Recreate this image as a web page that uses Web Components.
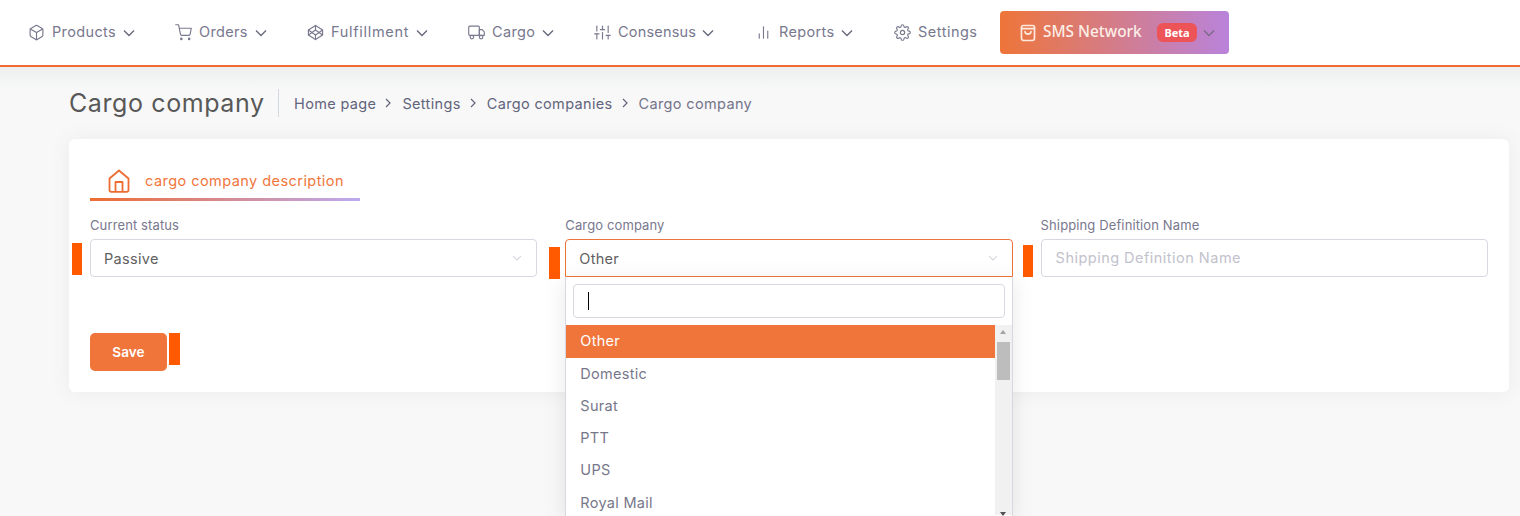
<!DOCTYPE html>
<html>
<head>
<meta charset="utf-8">
<style>
  html, body { margin: 0; height: 516px; overflow: hidden; }
  body { background: #f8f8f8; font-family: Inter, "Open Sans", sans-serif; }
</style>
</head>
<body>
<app-header>
  <nav-item icon="box" w="65" chevron>Products</nav-item>
  <nav-item icon="cart" w="50" chevron>Orders</nav-item>
  <nav-item icon="codepen" w="79" ls=".7" chevron>Fulfillment</nav-item>
  <nav-item icon="truck" w="44" chevron>Cargo</nav-item>
  <nav-item icon="sliders" w="78" ls=".2" chevron>Consensus</nav-item>
  <nav-item icon="chart" w="56" style="margin-left:1px" chevron>Reports</nav-item>
  <nav-item icon="settings" w="59" ls=".5" style="margin-left:1px">Settings</nav-item>
  <sms-button></sms-button>
</app-header>
<page-head title="Cargo company">
  <bread-crumb>Home page</bread-crumb>
  <bread-crumb>Settings</bread-crumb>
  <bread-crumb>Cargo companies</bread-crumb>
  <bread-crumb last>Cargo company</bread-crumb>
</page-head>
<form-card>
  <card-tab slot="tab">cargo company description</card-tab>
  <form-field label="Current status" mark="-18,4,10,32">
    <select-box value="Passive"></select-box>
  </form-field>
  <form-field label="Cargo company" mark="-16,8,11,32">
    <select-box value="Other" open>
      <select-menu>
        <menu-option active>Other</menu-option>
        <menu-option>Domestic</menu-option>
        <menu-option>Surat</menu-option>
        <menu-option>PTT</menu-option>
        <menu-option>UPS</menu-option>
        <menu-option style="margin-top:1px">Royal Mail</menu-option>
      </select-menu>
    </select-box>
  </form-field>
  <form-field label="Shipping Definition Name" mark="-18,6,10,32">
    <text-box placeholder="Shipping Definition Name"></text-box>
  </form-field>
  <save-button slot="footer">Save</save-button>
</form-card>

<script>
const ICONS = {
  box: '<path d="M21 16V8a2 2 0 0 0-1-1.73l-7-4a2 2 0 0 0-2 0l-7 4A2 2 0 0 0 3 8v8a2 2 0 0 0 1 1.73l7 4a2 2 0 0 0 2 0l7-4A2 2 0 0 0 21 16z"/><polyline points="3.27 6.96 12 12.01 20.73 6.96"/><line x1="12" y1="22.08" x2="12" y2="12"/>',
  cart: '<circle cx="9" cy="21" r="1"/><circle cx="20" cy="21" r="1"/><path d="M1 1h4l2.68 13.39a2 2 0 0 0 2 1.61h9.72a2 2 0 0 0 2-1.61L23 6H6"/>',
  codepen: '<polygon points="12 2 22 8.5 22 15.5 12 22 2 15.5 2 8.5 12 2"/><line x1="12" y1="22" x2="12" y2="15.5"/><polyline points="22 8.5 12 15.5 2 8.5"/><polyline points="2 15.5 12 8.5 22 15.5"/><line x1="12" y1="2" x2="12" y2="8.5"/>',
  truck: '<rect x="1" y="3" width="15" height="13" rx="1.5"/><polygon points="16 8 20 8 23 11 23 16 16 16 16 8"/><circle cx="5.5" cy="18.5" r="2.5"/><circle cx="18.5" cy="18.5" r="2.5"/>',
  sliders: '<line x1="4" y1="21" x2="4" y2="14"/><line x1="4" y1="10" x2="4" y2="3"/><line x1="12" y1="21" x2="12" y2="12"/><line x1="12" y1="8" x2="12" y2="3"/><line x1="20" y1="21" x2="20" y2="16"/><line x1="20" y1="12" x2="20" y2="3"/><line x1="1" y1="14" x2="7" y2="14"/><line x1="9" y1="8" x2="15" y2="8"/><line x1="17" y1="16" x2="23" y2="16"/>',
  chart: '<line x1="18" y1="20" x2="18" y2="10"/><line x1="12" y1="20" x2="12" y2="4"/><line x1="6" y1="20" x2="6" y2="14"/>',
  settings: '<circle cx="12" cy="12" r="3"/><path d="M19.4 15a1.65 1.65 0 0 0 .33 1.82l.06.06a2 2 0 0 1 0 2.83 2 2 0 0 1-2.83 0l-.06-.06a1.65 1.65 0 0 0-1.82-.33 1.65 1.65 0 0 0-1 1.51V21a2 2 0 0 1-2 2 2 2 0 0 1-2-2v-.09A1.65 1.65 0 0 0 9 19.4a1.65 1.65 0 0 0-1.82.33l-.06.06a2 2 0 0 1-2.83 0 2 2 0 0 1 0-2.83l.06-.06a1.65 1.65 0 0 0 .33-1.82 1.65 1.65 0 0 0-1.51-1H3a2 2 0 0 1-2-2 2 2 0 0 1 2-2h.09A1.65 1.65 0 0 0 4.6 9a1.65 1.65 0 0 0-.33-1.82l-.06-.06a2 2 0 0 1 0-2.83 2 2 0 0 1 2.83 0l.06.06a1.65 1.65 0 0 0 1.82.33H9a1.65 1.65 0 0 0 1-1.51V3a2 2 0 0 1 2-2 2 2 0 0 1 2 2v.09a1.65 1.65 0 0 0 1 1.51 1.65 1.65 0 0 0 1.82-.33l.06-.06a2 2 0 0 1 2.83 0 2 2 0 0 1 0 2.83l-.06.06a1.65 1.65 0 0 0-.33 1.82V9a1.65 1.65 0 0 0 1.51 1H21a2 2 0 0 1 2 2 2 2 0 0 1-2 2h-.09a1.65 1.65 0 0 0-1.51 1z"/>'
};

// small helper, every element below is just a shadow root with styles
class Base extends HTMLElement {
  constructor() {
    super();
    this.shadow = this.attachShadow({mode: 'open'});
  }
}

const CHEVRON = '<svg viewBox="0 0 12 12" width="12" height="12" fill="none" stroke="currentColor" stroke-width="1.3"><polyline points="1 3.5 6 8.5 11 3.5"/></svg>';

customElements.define('app-header', class extends Base {
  connectedCallback() {
    this.shadow.innerHTML = `
      <style>
        :host { display: flex; align-items: center; height: 65px; padding-left: 8px;
          background: #fff; border-bottom: 2px solid #ee6c32; }
      </style>
      <slot></slot>`;
  }
});

customElements.define('nav-item', class extends Base {
  connectedCallback() {
    const chevron = this.hasAttribute('chevron') ? `<span class="chev">${CHEVRON}</span>` : '';
    const ls = this.getAttribute('ls') || '.35';
    this.shadow.innerHTML = `
      <style>
        :host { display: flex; align-items: center; padding: 0 20px; color: #78788e; font-size: 14.5px; letter-spacing: ${ls}px; }
        svg.icon { width: 17px; height: 17px; margin-right: 7px; fill: none; stroke: currentColor; stroke-width: 1.6;
          stroke-linecap: round; stroke-linejoin: round; }
        .text { display: inline-block; white-space: nowrap; width: ${this.getAttribute('w')}px; margin-top: -2px; }
        .chev { display: flex; margin-left: 6px; color: #66667c; }
      </style>
      <svg class="icon" viewBox="0 0 24 24">${ICONS[this.getAttribute('icon')]}</svg>
      <span class="text"><slot></slot></span>${chevron}`;
  }
});

customElements.define('sms-button', class extends Base {
  connectedCallback() {
    this.shadow.innerHTML = `
      <style>
        :host { display: flex; align-items: center; width: 229px; height: 43px; box-sizing: border-box; margin-left: 3px; padding-left: 19px;
          border-radius: 4px; background: linear-gradient(90deg, #ee7539, #b983db); color: #fdeee6;
          font-family: "Noto Sans", sans-serif; font-size: 15.4px; font-weight: 500; }
        svg.bag { width: 18px; height: 18px; margin-right: 6px; fill: none; stroke: #fde9dc; stroke-width: 1.7; stroke-linecap: round; stroke-linejoin: round; }
        .name { width: 114px; white-space: nowrap; margin-top: -2px; }
        .beta { display: flex; align-items: center; justify-content: center; width: 40px; height: 19px; border-radius: 6px;
          background: #ec5458; color: #fff; font-size: 11px; font-weight: 700; }
        .chev { display: flex; margin-left: 6px; color: #7c6a88; }
      </style>
      <svg class="bag" viewBox="0 0 18 18"><path d="M2.5 3.2A1.7 1.7 0 0 1 4.2 1.5h9.6a1.7 1.7 0 0 1 1.7 1.7v11.1a2.2 2.2 0 0 1-2.2 2.2H4.7a2.2 2.2 0 0 1-2.2-2.2z"/><line x1="2.5" y1="4.6" x2="15.5" y2="4.6"/><path d="M6 7.6c.4 3.4 5.6 3.4 6 0"/></svg>
      <span class="name">SMS Network</span>
      <span class="beta">Beta</span>
      <span class="chev">${CHEVRON}</span>`;
  }
});

customElements.define('page-head', class extends Base {
  connectedCallback() {
    this.shadow.innerHTML = `
      <style>
        :host { display: flex; align-items: center; height: 72px; padding-left: 69px; position: relative; }
        :host::before { content: ''; position: absolute; left: 0; right: 0; top: 0; height: 22px;
          background: linear-gradient(#edeeee, #f8f8f8); }
        h1 { position: relative; margin: 0; font-size: 25px; font-weight: 400; color: #585858; width: 195px; white-space: nowrap; letter-spacing: .6px; }
        .crumbs { position: relative; display: flex; align-items: center; height: 28px; margin-left: 14px; padding-left: 15px; border-left: 1px solid #d3d8df; }
      </style>
      <h1>${this.getAttribute('title')}</h1>
      <div class="crumbs"><slot></slot></div>`;
  }
});

customElements.define('bread-crumb', class extends Base {
  connectedCallback() {
    const sep = this.hasAttribute('last') ? '' :
      '<svg viewBox="0 0 8 10" width="8" height="10" fill="none" stroke="currentColor" stroke-width="1.2"><polyline points="2 1 6 5 2 9"/></svg>';
    this.shadow.innerHTML = `
      <style>
        :host { display: flex; align-items: center; gap: 8px; margin-right: 10px; color: #62647c; font-size: 14.5px; letter-spacing: .35px; white-space: nowrap; }
        :host([last]) { color: #74748a; margin-right: 0; }
      </style>
      <slot></slot>${sep}`;
  }
});

customElements.define('form-card', class extends Base {
  connectedCallback() {
    this.shadow.innerHTML = `
      <style>
        :host { display: block; box-sizing: border-box; width: 1440px; height: 253px; margin-left: 69px; padding: 0 21px; background: #fff;
          border-radius: 6px; box-shadow: 0 0 20px rgba(90,90,90,.08); }
        .tabs { height: 62px; }
        .row { display: grid; grid-template-columns: repeat(3, 447.3px); column-gap: 28px; margin-top: 15px; }
        .foot { margin-top: 56px; }
      </style>
      <div class="tabs"><slot name="tab"></slot></div>
      <div class="row"><slot></slot></div>
      <div class="foot"><slot name="footer"></slot></div>`;
  }
});

customElements.define('card-tab', class extends Base {
  connectedCallback() {
    this.shadow.innerHTML = `
      <style>
        :host { display: flex; align-items: center; box-sizing: border-box; width: 270px; height: 62px; padding: 21px 0 0 18px; position: relative;
          color: #f0763c; font-size: 14.5px; letter-spacing: .45px; white-space: nowrap; }
        :host::after { content: ''; position: absolute; left: 0; right: 0; bottom: 0; height: 3px; background: linear-gradient(90deg, #ee6c32, #bcaaf0); }
        svg { width: 22px; height: 24px; margin-right: 15px; fill: none; stroke: #ee6c32; stroke-width: 1.8; stroke-linejoin: round; }
      </style>
      <svg viewBox="0 0 22 24"><path d="M1.5 9.5L11 1.5l9.5 8V21a1.8 1.8 0 0 1-1.8 1.8H3.3A1.8 1.8 0 0 1 1.5 21z"/><path d="M7.5 22.8V13h7v9.8"/></svg>
      <slot></slot>`;
  }
});

customElements.define('form-field', class extends Base {
  connectedCallback() {
    const [x, y, w, h] = this.getAttribute('mark').split(',');
    this.shadow.innerHTML = `
      <style>
        :host { display: block; }
        label { display: block; height: 18px; margin-bottom: 5px; padding-top: 1px; margin-top: -1px; font-size: 13px; line-height: 18px; color: #78788e; letter-spacing: .12px; white-space: nowrap; }
        .wrap { position: relative; }
        .mark { position: absolute; left: ${x}px; top: ${y}px; width: ${w}px; height: ${h}px; background: #ff5a00; }
      </style>
      <label>${this.getAttribute('label')}</label>
      <div class="wrap"><slot></slot><span class="mark"></span></div>`;
  }
});

const FIELD_CSS = `
  :host { display: block; position: relative; }
  .box { display: flex; align-items: center; justify-content: space-between; box-sizing: border-box; height: 38px; padding: 0 13px; background: #fff;
    border: 1px solid #d8d8e2; border-radius: 4px; font-size: 14.5px; letter-spacing: .3px; color: #5f5f5f; }
`;

customElements.define('select-box', class extends Base {
  connectedCallback() {
    const open = this.hasAttribute('open');
    this.shadow.innerHTML = `
      <style>
        ${FIELD_CSS}
        .chev { display: flex; margin-right: 0; color: #cfcfd9; transform: scale(.8); }
        :host([open]) .box { border-color: #ee7539; border-radius: 4px 4px 0 0; }
      </style>
      <div class="box"><span>${this.getAttribute('value')}</span><span class="chev">${CHEVRON}</span></div>
      ${open ? '<slot></slot>' : ''}`;
  }
});

customElements.define('text-box', class extends Base {
  connectedCallback() {
    this.shadow.innerHTML = `
      <style>
        ${FIELD_CSS}
        .box { color: #c2c2cc; padding-left: 14px; letter-spacing: .48px; }
        span { margin-top: -2px; }
      </style>
      <div class="box"><span>${this.getAttribute('placeholder')}</span></div>`;
  }
});

customElements.define('select-menu', class extends Base {
  connectedCallback() {
    this.shadow.innerHTML = `
      <style>
        :host { display: block; position: absolute; left: 0; right: 0; top: 38px; height: 240px; box-sizing: border-box; background: #fff;
          border: solid #d8d8e2; border-width: 0 1px; box-shadow: 0 4px 20px rgba(90,90,90,.14); z-index: 5; }
        .search { box-sizing: border-box; height: 34px; margin: 7px; padding: 6px 14px; border: 1px solid #d8d8e2; border-radius: 4px; }
        .caret { display: block; width: 1px; height: 18px; margin-top: 1px; background: #000; }
        .list { display: flex; height: 190px; }
        .items { flex: 1; }
        .bar { position: relative; width: 17px; background: #f1f1f1; }
        .up, .down { position: absolute; left: 5px; width: 0; height: 0; border: 3.5px solid transparent; border-top: 0; }
        .up { top: 5px; border-bottom: 4px solid #a3a3a3; }
        .down { top: 187px; border-bottom: 0; border-top: 4px solid #505050; }
        .thumb { position: absolute; left: 2px; right: 2px; top: 17px; height: 38px; background: #bdbdbd; }
      </style>
      <div class="search"><span class="caret"></span></div>
      <div class="list">
        <div class="items"><slot></slot></div>
        <div class="bar"><span class="up"></span><span class="thumb"></span><span class="down"></span></div>
      </div>`;
  }
});

customElements.define('menu-option', class extends Base {
  connectedCallback() {
    this.shadow.innerHTML = `
      <style>
        :host { display: flex; align-items: center; height: 32px; padding-left: 14px; color: #77778a; font-size: 14.5px; letter-spacing: .3px; }
        :host([active]) { height: 33px; background: #f0753b; color: #fff; }
        span { margin-top: -2px; }
      </style>
      <span><slot></slot></span>`;
  }
});

customElements.define('save-button', class extends Base {
  connectedCallback() {
    this.shadow.innerHTML = `
      <style>
        :host { display: inline-flex; align-items: center; justify-content: center; position: relative; width: 77px; height: 38px; background: #f0753b;
          border-radius: 5px; color: #fff; font-size: 13.5px; font-weight: 600; letter-spacing: .1px; }
        .mark { position: absolute; left: 79px; top: 0; width: 11px; height: 32px; background: #ff5a00; }
      </style>
      <slot></slot><span class="mark"></span>`;
  }
});
</script>
</body>
</html>
